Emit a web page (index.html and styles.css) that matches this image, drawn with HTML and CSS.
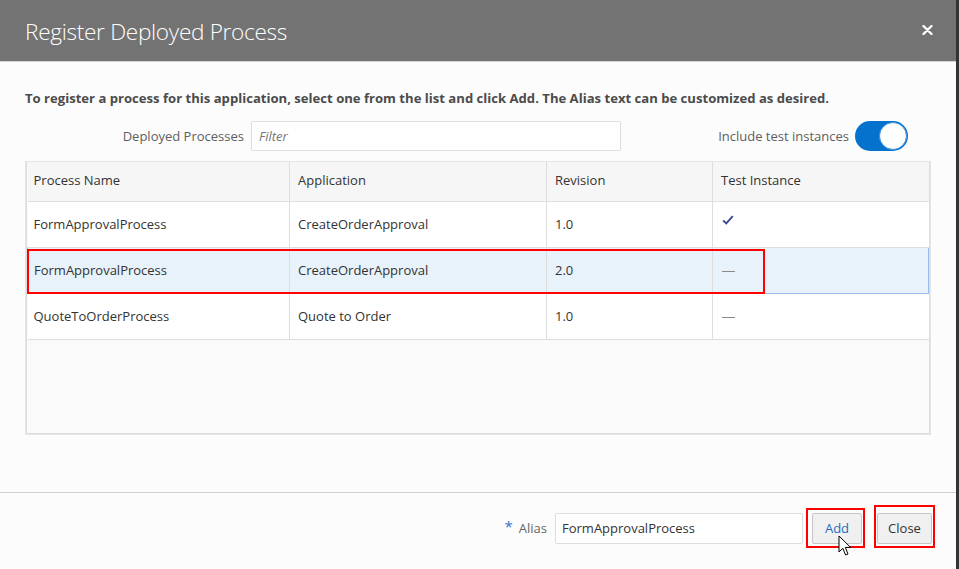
FILE: index.html
```html
<!DOCTYPE html>
<html>
<head>
<meta charset="utf-8">
<link rel="stylesheet" href="styles.css">
</head>
<body>
<div class="dialog">
  <div class="header">
    <div class="title">Register Deployed Process</div>
    <svg class="close-x" width="11" height="10" viewBox="0 0 11 10"><path d="M1.5 1 L9.5 9 M9.5 1 L1.5 9" stroke="#fff" stroke-width="2.4" stroke-linecap="round"/></svg>
  </div>
  <div class="body">
    <div class="instructions">To register a process for this application, select one from the list and click Add. The Alias text can be customized as desired.</div>
    <div class="filter-row">
      <label class="filter-label">Deployed Processes</label>
      <div class="input filter-input"><span class="placeholder">Filter</span></div>
      <div class="spacer"></div>
      <span class="toggle-label">Include test instances</span>
      <div class="toggle"><div class="knob"></div></div>
    </div>
    <div class="table-outer">
      <div class="table-inner">
        <table class="grid">
          <colgroup><col class="c1"><col class="c2"><col class="c3"><col class="c4"></colgroup>
          <thead>
            <tr><th>Process Name</th><th>Application</th><th>Revision</th><th>Test Instance</th></tr>
          </thead>
          <tbody>
            <tr><td>FormApprovalProcess</td><td>CreateOrderApproval</td><td>1.0</td><td class="check-cell"><svg width="12" height="10" viewBox="0 0 12 10"><path d="M1.2 5.5 L4.3 8.4 L10.8 1.2" fill="none" stroke="#3e4c8e" stroke-width="2"/></svg></td></tr>
            <tr class="selected"><td>FormApprovalProcess</td><td>CreateOrderApproval</td><td>2.0</td><td><span class="dash"></span></td></tr>
            <tr><td>QuoteToOrderProcess</td><td>Quote to Order</td><td>1.0</td><td><span class="dash"></span></td></tr>
          </tbody>
        </table>
        <div class="red-box row-box"></div>
      </div>
    </div>
  </div>
  <div class="footer">
    <span class="req">*</span>
    <span class="alias-label">Alias</span>
    <div class="input alias-input">FormApprovalProcess</div>
    <div class="btn-wrap add-wrap">
      <button class="btn btn-add">Add</button>
      <div class="red-box add-box"></div>
      <svg class="cursor" width="14" height="22" viewBox="0 0 14 22"><path d="M1 1 L1 17 L4.8 13.3 L7.6 20 L10 19 L7.3 12.4 L12.6 12.4 Z" fill="#fff" stroke="#000" stroke-width="1" stroke-linejoin="miter"/></svg>
    </div>
    <div class="btn-wrap close-wrap">
      <button class="btn btn-close">Close</button>
      <div class="red-box close-box"></div>
    </div>
  </div>
</div>
</body>
</html>
```
FILE: styles.css
```css
* { box-sizing: border-box; }
html, body { margin: 0; padding: 0; }
body {
  background: #fcfcfc;
  font-family: "Open Sans", "Noto Sans", sans-serif;
  font-size: 13px;
  color: #333;
  width: 959px;
  height: 569px;
  overflow: hidden;
}
.dialog {
  width: 959px;
  height: 569px;
  border-right: 3px solid #343434;
  display: flex;
  flex-direction: column;
  background: #fcfcfc;
}
.header {
  height: 62px;
  flex: none;
  background: #737373;
  border-bottom: 1px solid #d4d4d4;
  display: flex;
  align-items: center;
  padding: 0 23px 0 25px;
}
.title {
  color: #fff;
  font-size: 22.6px;
  font-weight: 300;
  letter-spacing: -0.3px;
  flex: 1;
  margin-top: 1px;
}
.close-x { margin-top: -1px; }
.body {
  flex: 1;
  padding: 28px 25px 0 25px;
  display: flex;
  flex-direction: column;
}
.instructions {
  font-weight: bold;
  color: #4b4b4b;
  font-size: 13.1px;
  line-height: 16px;
  white-space: nowrap;
}
.filter-row {
  display: flex;
  align-items: center;
  margin-top: 15px;
  height: 30px;
}
.filter-label {
  width: 226px;
  text-align: right;
  color: #5e5e5e;
  padding-right: 7px;
}
.input {
  height: 30px;
  border: 1px solid #dedede;
  background: #fff;
  border-radius: 2px;
  display: flex;
  align-items: center;
  padding-left: 7px;
}
.filter-input { width: 370px; }
.placeholder { font-style: italic; color: #757575; }
.spacer { flex: 1; }
.toggle-label { color: #5e5e5e; margin-right: 6px; }
.toggle {
  width: 53px;
  height: 30px;
  border-radius: 15px;
  background: #0572ce;
  margin-right: 23px;
  position: relative;
}
.knob {
  position: absolute;
  right: 1px;
  top: 1px;
  width: 28px;
  height: 28px;
  border-radius: 50%;
  background: #fff;
  border: 1px solid #3f8fd8;
}
.table-outer {
  margin-top: 10px;
  height: 274px;
  border: 1px solid #e6e6e6;
}
.table-inner {
  height: 100%;
  border: 1px solid #dcdcdc;
  border-top: none;
  background: #fafafa;
  position: relative;
}
.grid {
  border-collapse: collapse;
  width: 901px;
  table-layout: fixed;
}
.c1 { width: 262px; }
.c2 { width: 257px; }
.c3 { width: 166px; }
.c4 { width: 216px; }
.grid th {
  font-weight: normal;
  text-align: left;
  background: #f6f6f6;
  height: 39px;
  padding: 0 8px 3px 8px;
  border-right: 1px solid #dedede;
  border-bottom: 1px solid #dedede;
  color: #333;
}
.grid th:first-child, .grid td:first-child { padding-left: 6px; }
.grid th:last-child, .grid td:last-child { border-right: none; }
.grid td {
  background: #fff;
  height: 46px;
  padding: 0 8px;
  border-right: 1px solid #dedede;
  border-bottom: 1px solid #dedede;
  color: #333;
}
.grid td.check-cell { vertical-align: top; padding-top: 9px; padding-left: 9px; }
.grid tr.selected td {
  background: #e8f2fa;
  border-top: 1px solid #97bef1;
  border-bottom: 1px solid #97bef1;
}
.grid tr.selected td:first-child { border-left: 1px solid #97bef1; }
.grid tr.selected td:last-child { border-right: 1px solid #97bef1; }
.dash {
  display: inline-block;
  width: 13px;
  height: 1px;
  background: #8a8a8a;
  vertical-align: middle;
  margin-left: 1px;
}
.red-box {
  position: absolute;
  border: 2px solid #f00;
  pointer-events: none;
}
.row-box {
  left: 0;
  top: 87px;
  width: 738px;
  height: 45px;
}
.footer {
  height: 77px;
  flex: none;
  border-top: 1px solid #cfcfcf;
  display: flex;
  align-items: center;
  justify-content: flex-end;
  padding: 0 24px 6px 0;
}
.req { color: #3b73c4; font-size: 15px; margin-right: 6px; margin-top: -4px; }
.alias-label { color: #666; margin-right: 8px; }
.alias-input { width: 248px; height: 31px; color: #333; padding-left: 6px; }
.btn-wrap { position: relative; }
.add-wrap { margin-left: 9px; }
.close-wrap { margin-left: 15px; }
.btn {
  font-family: inherit;
  font-size: 13px;
  height: 31px;
  background: #f0f0f0;
  border: 1px solid #c6c6c6;
  border-radius: 2px;
  color: #333;
  padding: 0;
  display: block;
}
.btn-add { width: 50px; color: #1b6ec2; }
.btn-close { width: 55px; }
.add-box { left: -6px; top: -5px; width: 59px; height: 40px; }
.close-box { left: -3px; top: -8px; width: 61px; height: 43px; }
.cursor { position: absolute; left: 26px; top: 22px; }
```
